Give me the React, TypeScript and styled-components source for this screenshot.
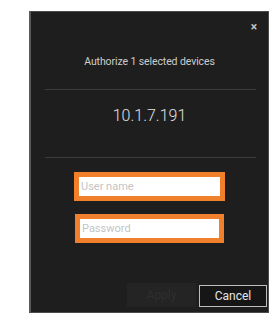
import React from "react";
import styled, { createGlobalStyle } from "styled-components";

const Global = createGlobalStyle`
  html, body { margin: 0; padding: 0; background: #ffffff; }
  body { font-family: Roboto, "Liberation Sans", sans-serif; }
`;

const Page = styled.div`
  padding: 11px 0 0 29px;
  width: 279px;
  height: 319px;
  box-sizing: border-box;
`;

const Dialog = styled.div`
  position: relative;
  width: 240px;
  height: 302px;
  box-sizing: border-box;
  background: #1e1e1e;
  border: 1px solid #4a4a4a;
  border-left: 2px solid #5a5a5a;
  display: flex;
  flex-direction: column;
  align-items: stretch;
`;

const Close = styled.div`
  position: absolute;
  top: 9px;
  right: 11px;
  color: #c4c4c4;
  font-size: 12px;
  font-weight: 700;
  line-height: 12px;
`;

const Title = styled.div`
  margin-top: 43px;
  text-align: center;
  color: #cdcdcd;
  font-size: 10.5px;
  letter-spacing: -0.1px;
  line-height: 14px;
`;

const Divider = styled.div<{ $top: number }>`
  height: 1px;
  background: #3c3c3c;
  margin: ${(p) => p.$top}px 12px 0 14px;
`;

const Ip = styled.div`
  margin-top: 17px;
  text-align: center;
  color: #e0e0e0;
  font-size: 16px;
  font-weight: 300;
  line-height: 18px;
`;

const Fields = styled.div`
  margin-top: 14px;
  display: flex;
  flex-direction: column;
  align-items: center;
  gap: 13px;
`;

const Field = styled.div<{ $w: number }>`
  width: ${(p) => p.$w}px;
  height: 29px;
  box-sizing: border-box;
  border: 5px solid #f0802c;
  background: #ffffff;
  display: flex;
  align-items: center;
  padding-left: 2px;
  color: #c4c4c4;
  font-size: 11px;
`;

const Footer = styled.div`
  margin-top: auto;
  display: flex;
  justify-content: flex-end;
  align-items: flex-end;
  gap: 3px;
  padding: 0 1px 5px 0;
`;

const Button = styled.div<{ $primary?: boolean }>`
  width: ${(p) => (p.$primary ? 69 : 68)}px;
  height: ${(p) => (p.$primary ? 24 : 22)}px;
  box-sizing: border-box;
  display: flex;
  align-items: center;
  justify-content: center;
  font-size: 12px;
  background: ${(p) => (p.$primary ? "#242424" : "#161616")};
  color: ${(p) => (p.$primary ? "#2f2f2f" : "#e6e6e6")};
  border: ${(p) => (p.$primary ? "none" : "1px solid #bdbdbd")};
`;

export default function App() {
  return (
    <>
      <Global />
      <Page>
        <Dialog>
          <Close>×</Close>
          <Title>Authorize 1 selected devices</Title>
          <Divider $top={20} />
          <Ip>10.1.7.191</Ip>
          <Divider $top={32} />
          <Fields>
            <Field $w={151}>User name</Field>
            <Field $w={149}>Password</Field>
          </Fields>
          <Footer>
            <Button $primary>Apply</Button>
            <Button>Cancel</Button>
          </Footer>
        </Dialog>
      </Page>
    </>
  );
}
